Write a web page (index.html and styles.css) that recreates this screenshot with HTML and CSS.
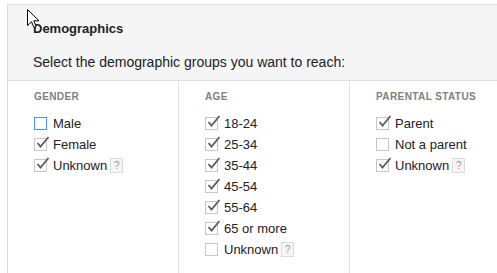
FILE: index.html
```html
<!DOCTYPE html>
<html>
<head>
    <meta charset="UTF-8">
    <title>Demographics</title>
    <link rel="stylesheet" href="styles.css">
</head>
<body>
    <div class="card">
        <div class="card-head">
            <h1 class="title">Demographics</h1>
            <p class="intro">Select the demographic groups you want to reach:</p>
        </div>
        <div class="columns">
            <div class="col">
                <h2 class="col-title">GENDER</h2>
                <label class="row"><span class="box focus"></span>Male</label>
                <label class="row"><span class="box"><svg class="tick" width="16" height="14" viewBox="0 0 16 14"><path d="M3.5 7 L6.5 10.5 L14.5 1" fill="none" stroke="#5c5c5c" stroke-width="1.8"/></svg></span>Female</label>
                <label class="row"><span class="box"><svg class="tick" width="16" height="14" viewBox="0 0 16 14"><path d="M3.5 7 L6.5 10.5 L14.5 1" fill="none" stroke="#5c5c5c" stroke-width="1.8"/></svg></span>Unknown<span class="help">?</span></label>
            </div>
            <div class="col">
                <h2 class="col-title">AGE</h2>
                <label class="row"><span class="box"><svg class="tick" width="16" height="14" viewBox="0 0 16 14"><path d="M3.5 7 L6.5 10.5 L14.5 1" fill="none" stroke="#5c5c5c" stroke-width="1.8"/></svg></span>18-24</label>
                <label class="row"><span class="box"><svg class="tick" width="16" height="14" viewBox="0 0 16 14"><path d="M3.5 7 L6.5 10.5 L14.5 1" fill="none" stroke="#5c5c5c" stroke-width="1.8"/></svg></span>25-34</label>
                <label class="row"><span class="box"><svg class="tick" width="16" height="14" viewBox="0 0 16 14"><path d="M3.5 7 L6.5 10.5 L14.5 1" fill="none" stroke="#5c5c5c" stroke-width="1.8"/></svg></span>35-44</label>
                <label class="row"><span class="box"><svg class="tick" width="16" height="14" viewBox="0 0 16 14"><path d="M3.5 7 L6.5 10.5 L14.5 1" fill="none" stroke="#5c5c5c" stroke-width="1.8"/></svg></span>45-54</label>
                <label class="row"><span class="box"><svg class="tick" width="16" height="14" viewBox="0 0 16 14"><path d="M3.5 7 L6.5 10.5 L14.5 1" fill="none" stroke="#5c5c5c" stroke-width="1.8"/></svg></span>55-64</label>
                <label class="row"><span class="box"><svg class="tick" width="16" height="14" viewBox="0 0 16 14"><path d="M3.5 7 L6.5 10.5 L14.5 1" fill="none" stroke="#5c5c5c" stroke-width="1.8"/></svg></span>65 or more</label>
                <label class="row"><span class="box"></span>Unknown<span class="help">?</span></label>
            </div>
            <div class="col">
                <h2 class="col-title">PARENTAL STATUS</h2>
                <label class="row"><span class="box"><svg class="tick" width="16" height="14" viewBox="0 0 16 14"><path d="M3.5 7 L6.5 10.5 L14.5 1" fill="none" stroke="#5c5c5c" stroke-width="1.8"/></svg></span>Parent</label>
                <label class="row"><span class="box"></span>Not a parent</label>
                <label class="row"><span class="box"><svg class="tick" width="16" height="14" viewBox="0 0 16 14"><path d="M3.5 7 L6.5 10.5 L14.5 1" fill="none" stroke="#5c5c5c" stroke-width="1.8"/></svg></span>Unknown<span class="help">?</span></label>
            </div>
        </div>
    </div>
    <svg class="cursor" width="13" height="20" viewBox="0 0 13 20">
        <path d="M0.5 0.5 L0.5 16.5 L4.5 12.8 L7 18.5 L9.2 17.5 L6.8 11.8 L12 11.8 Z" fill="#ffffff" stroke="#000000" stroke-width="1"/>
    </svg>
</body>
</html>
```

FILE: styles.css
```css
body {
  margin: 0;
  background-color: #ffffff;
  font-family: "Liberation Sans", Arial, sans-serif;
  color: #222222;
  overflow: hidden;
}

.card {
  margin: 4px 0 0 7px;
  border: 1px solid #dcdcdc;
  border-right: none;
}

.card-head {
  background-color: #f5f5f5;
  padding: 16px 24px 9px 25px;
  border-bottom: 1px solid #e0e0e0;
}

.title {
  margin: 0;
  font-size: 13px;
  line-height: 16px;
  font-weight: bold;
  color: #222222;
}

.intro {
  margin: 17px 0 0 0;
  font-size: 14px;
  line-height: 17px;
}

.columns {
  display: flex;
}

.col {
  width: 171px;
  flex-shrink: 0;
  padding: 10px 0 14px 26px;
  box-sizing: border-box;
  border-left: 1px solid #e0e0e0;
}

.col:first-child {
  width: 170px;
  border-left: none;
}

.col:last-child {
  flex: 1;
}

.col-title {
  margin: 0 0 10px 0;
  font-size: 10px;
  line-height: 12px;
  font-weight: bold;
  letter-spacing: 0.4px;
  color: #808080;
}

.row {
  display: flex;
  align-items: center;
  height: 21px;
  font-size: 13px;
}

.box {
  position: relative;
  flex-shrink: 0;
  width: 11px;
  height: 11px;
  border: 1px solid #c6c6c6;
  margin-right: 6px;
  background-color: #ffffff;
}

.box.focus {
  border-color: #4d90fe;
}

.tick {
  position: absolute;
  left: -1px;
  top: -3px;
}

.help {
  display: inline-flex;
  align-items: center;
  justify-content: center;
  width: 11px;
  height: 13px;
  margin-left: 3px;
  border: 1px solid #dcdcdc;
  background-color: #f5f5f5;
  color: #999999;
  font-size: 10px;
}

.cursor {
  position: absolute;
  left: 27px;
  top: 9px;
}
```
